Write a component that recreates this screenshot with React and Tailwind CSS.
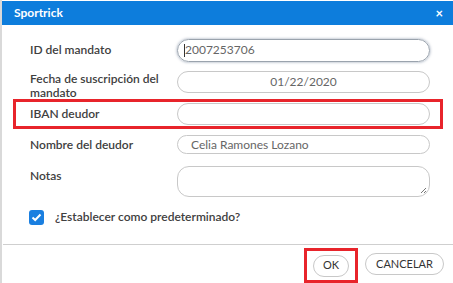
import React from "react";

export default function App() {
  const font = { fontFamily: "Lato, 'Noto Sans', sans-serif" };
  return (
    <div className="w-[453px] h-[283px] bg-white flex overflow-hidden" style={font}>
      <div className="w-[2px] bg-[#d9d9d9] shrink-0" />
      <div className="flex-1 flex flex-col">
        <div className="h-[24px] mt-[1px] bg-[#0d7ddc] flex items-center justify-between pl-[12px] pr-[10px] text-white">
          <span className="text-[12px] font-bold">Sportrick</span>
          <span className="text-[13px] font-bold leading-none">×</span>
        </div>
        <div className="flex-1 flex flex-col pl-[11px] pr-[10px] pt-[13px]">
          <div className="flex items-center h-[24px] pl-[17px] pr-[13px]">
            <div className="w-[147px] text-[12px] font-semibold text-[#404040]">ID del mandato</div>
            <div className="flex-1 h-[23px] rounded-full border border-[#9aa3ad] shadow-[0_0_3px_rgba(80,100,130,0.6)] flex items-center pl-[6px] text-[12px] text-[#666]">
              <span className="w-px h-[13px] bg-[#333]" />
              2007253706
            </div>
          </div>
          <div className="flex items-start h-[22px] mt-[9px] pl-[17px] pr-[13px]">
            <div className="w-[147px] text-[12px] font-semibold text-[#404040] leading-[14px] pt-[1px]">Fecha de suscripción del mandato</div>
            <div className="flex-1 h-[22px] rounded-full border border-[#c8c8c8] flex items-center justify-center text-[12px] text-[#666]">01/22/2020</div>
          </div>
          <div className="mt-[6px] border-[3px] border-[#e8242b] h-[30px] flex items-center pl-[14px] pr-[10px]">
            <div className="w-[147px] text-[12px] font-semibold text-[#404040]">IBAN deudor</div>
            <div className="flex-1 h-[22px] rounded-full border border-[#c8c8c8]" />
          </div>
          <div className="flex items-center mt-[6px] pl-[17px] pr-[13px]">
            <div className="w-[147px] text-[12px] font-semibold text-[#404040]">Nombre del deudor</div>
            <div className="flex-1 h-[19px] rounded-full border border-[#c8c8c8] flex items-center pl-[13px] text-[12px] text-[#666]">Celia Ramones Lozano</div>
          </div>
          <div className="flex items-start mt-[12px] pl-[17px] pr-[13px]">
            <div className="w-[147px] text-[12px] font-semibold text-[#404040] pt-[1px]">Notas</div>
            <div className="flex-1 h-[31px] rounded-[12px] border border-[#c8c8c8] relative">
              <svg className="absolute right-[2px] bottom-[2px]" width="7" height="7" viewBox="0 0 7 7">
                <path d="M6 1L1 6M6 4L4 6" stroke="#777" strokeWidth="1" />
              </svg>
            </div>
          </div>
          <div className="flex items-center mt-[11px] pl-[16px]">
            <div className="w-[15px] h-[15px] rounded-[3px] bg-[#1a7fe0] flex items-center justify-center">
              <svg width="11" height="9" viewBox="0 0 11 9">
                <path d="M1.5 4.5L4.2 7L9.5 1.5" stroke="white" strokeWidth="2" fill="none" />
              </svg>
            </div>
            <span className="ml-[11px] text-[12px] font-semibold text-[#404040]">¿Establecer como predeterminado?</span>
          </div>
        </div>
        <div className="h-px bg-[#cfcfcf] ml-px" />
        <div className="h-[38px] flex items-center justify-end pr-[9px]">
          <div className="border-[3px] border-[#e8242b] w-[54px] h-[35px] mt-[3px] flex items-center justify-center">
            <div className="w-[36px] h-[22px] rounded-full border border-[#c8c8c8] flex items-center justify-center text-[11px] text-[#333]">OK</div>
          </div>
          <div className="ml-[7px] w-[79px] h-[22px] rounded-full border border-[#c8c8c8] flex items-center justify-center text-[11px] text-[#333]">CANCELAR</div>
        </div>
      </div>
    </div>
  );
}
